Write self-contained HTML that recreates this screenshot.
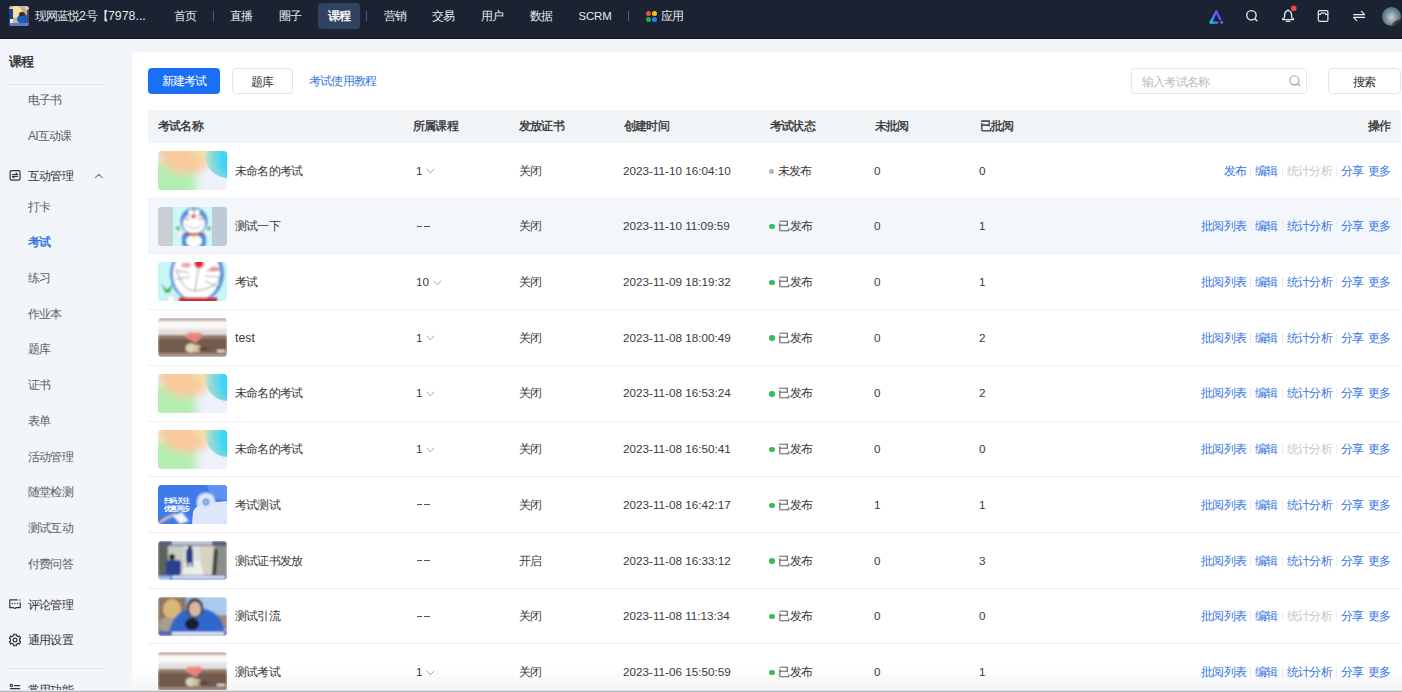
<!DOCTYPE html>
<html><head><meta charset="utf-8">
<style>
*{margin:0;padding:0;box-sizing:border-box}
html,body{width:1402px;height:692px;overflow:hidden;background:#f2f5f9;font-family:"Liberation Sans",sans-serif;color:#333;font-size:12px;letter-spacing:-0.8px}
.lt{letter-spacing:0;font-size:11.7px}
i{display:block;font-style:normal}
.abs{position:absolute;white-space:nowrap}
#nav{position:absolute;left:0;top:0;width:1402px;height:39px;background:#1b2232;border-bottom:1px solid #131822;z-index:5}
#nav .t{position:absolute;top:0;line-height:32px;color:#e6e8ec;font-size:12px;white-space:nowrap;letter-spacing:-1px}
#nav .act{position:absolute;left:318px;top:3px;width:42px;height:26px;border-radius:4px;background:#2e4462}
#nav .sep{position:absolute;top:11px;width:1px;height:10px;background:#555d6c}
#side{position:absolute;left:0;top:39px;width:132px;height:653px}
.st{position:absolute;left:28px;line-height:16px;height:16px;color:#5c5f66;white-space:nowrap}
.st.grp{color:#333}
.st.on{color:#2a6ee8;-webkit-text-stroke:0.4px #2a6ee8}
.sdiv{position:absolute;left:9px;width:97px;height:1px;background:#e3e6eb}
#card{position:absolute;left:132px;top:52px;width:1270px;height:640px;background:#fff}
.btn{position:absolute;height:26px;border-radius:4px;line-height:26px;text-align:center;font-size:12px;white-space:nowrap}
.hd{position:absolute;left:148px;top:110px;width:1253px;height:33px;background:#f2f5f8}
.hd span{position:absolute;top:9px;line-height:14px;color:#333;-webkit-text-stroke:0.35px #333;white-space:nowrap}
.row{position:absolute;left:148px;width:1253px;height:55.71px;border-bottom:1px solid #eef0f3;background:#fff}
.row.hov{background:#f3f7fc}
.th{position:absolute;left:10px;top:8px;width:69px;height:39px;border-radius:3px;overflow:hidden}
.c{position:absolute;top:19.5px;line-height:16px;height:16px;white-space:nowrap;color:#3a3a3a}
.nm{left:87px}
.co{left:268px}
.ce{left:371px}
.tm{left:475px}
.stt{left:621px}
.ur{left:726px}
.rd{left:831px}
.ac{right:11px;display:flex;align-items:center}
.cn{display:inline-block}
.chev{display:inline-block;margin-left:3.5px;position:relative;top:0px;vertical-align:middle}
.dash{display:flex;gap:2px;padding-left:0.5px;height:16px;align-items:center}.dash i{width:5.8px;height:1.1px;background:#555}
.dot{display:inline-block;width:5.4px;height:5.4px;border-radius:50%;background:#34bf5e;margin-right:4px;position:relative;top:-0.8px;left:0.4px}
.dot.grey{background:#b4b4b4;width:4.6px;height:4.6px}
.lk{color:#3877e4}
.lk.dis{color:#c4c6ca}
.lk.m{margin-left:4.2px}
.vs{display:inline-block;width:1px;height:10px;background:#ebedf0;margin:0 4.15px}
</style></head><body>
<div id="nav">
  <svg class="abs" style="left:8.5px;top:6.2px" width="20" height="20" viewBox="0 0 20 20"><defs><clipPath id="av"><rect width="20" height="20" rx="2.2"/></clipPath><filter id="avb"><feGaussianBlur stdDeviation="0.5"/></filter></defs><g clip-path="url(#av)"><g filter="url(#avb)">
<rect width="20" height="20" fill="#c9b48a"/>
<ellipse cx="7" cy="6" rx="6" ry="6" fill="#f3e2a8"/>
<rect x="0" y="3" width="4" height="15" fill="#1f3f8a"/>
<rect x="1" y="13" width="3" height="5" fill="#e8eef8"/>
<ellipse cx="14" cy="13" rx="6" ry="5" fill="#1f5bc0"/>
<ellipse cx="13" cy="8" rx="3" ry="2" fill="#3b2c22"/>
<rect x="18" y="0" width="2" height="20" fill="#5a4a48"/>
<circle cx="18" cy="2" r="2" fill="#c8d4e8"/>
<rect x="0" y="17" width="20" height="3" fill="#5a7ec8"/>
</g></g></svg>
  <div class="t" style="left:35px">现网蓝悦<span class="lt" style="font-size:12.4px">2</span>号【<span class="lt" style="font-size:12.4px">7978...</span></div>
  <div class="act"></div>
  <div class="t" style="left:174px">首页</div>
  <div class="sep" style="left:213px"></div>
  <div class="t" style="left:230px">直播</div>
  <div class="t" style="left:279px">圈子</div>
  <div class="t" style="left:327.5px;color:#fff;-webkit-text-stroke:0.4px #fff">课程</div>
  <div class="sep" style="left:366px"></div>
  <div class="t" style="left:384px">营销</div>
  <div class="t" style="left:432px">交易</div>
  <div class="t" style="left:481px">用户</div>
  <div class="t" style="left:530px">数据</div>
  <div class="t" style="left:578.5px;letter-spacing:-0.1px;font-size:11.4px">SCRM</div>
  <div class="sep" style="left:628px"></div>
  <div class="t" style="left:661px">应用</div>
  <div class="abs" style="left:646px;top:11px;width:11px;height:11px">
    <i style="position:absolute;left:0;top:0;width:5px;height:5px;border-radius:50%;background:#e9533c"></i>
    <i style="position:absolute;left:6px;top:0;width:5px;height:5px;border-radius:50%;background:#f4c41a"></i>
    <i style="position:absolute;left:0;top:6px;width:5px;height:5px;border-radius:50%;background:#22a95b"></i>
    <i style="position:absolute;left:6px;top:6px;width:5px;height:5px;border-radius:50%;background:#2b7ef0"></i>
  </div>
  <svg class="abs" style="left:1208px;top:8.6px" width="17" height="16" viewBox="0 0 17 16">
    <defs><linearGradient id="ga" x1="0" y1="1" x2="1" y2="0"><stop offset="0" stop-color="#27c2f7"/><stop offset="0.5" stop-color="#3a7cf5"/><stop offset="1" stop-color="#6a4cf0"/></linearGradient></defs>
    <path d="M8.3 2.6 L2.6 13.6 L9.2 13.6" fill="none" stroke="url(#ga)" stroke-width="2.4" stroke-linejoin="round" stroke-linecap="round"/>
    <path d="M8.3 2.6 L12.2 10.2" fill="none" stroke="#5a55f0" stroke-width="2.4" stroke-linecap="round"/>
    <circle cx="13.6" cy="13.2" r="1.5" fill="#7a5cf0"/>
  </svg>
  <svg class="abs" style="left:1244px;top:8px" width="16" height="16" viewBox="0 0 16 16">
    <circle cx="7.4" cy="7.3" r="4.7" fill="none" stroke="#e6e7ea" stroke-width="1.4"/>
    <path d="M10.8 10.7 L12.9 12.7" stroke="#e6e7ea" stroke-width="1.4" stroke-linecap="round"/>
  </svg>
  <svg class="abs" style="left:1280px;top:4px" width="20" height="20" viewBox="0 0 20 20">
    <path d="M2.6 15.6 Q2.6 14.6 3.8 14.2 Q4.6 13.8 4.6 12.4 L4.6 11.2 Q4.6 7.6 7.6 6.7 L7.8 6 Q8 5.7 8.3 6 L8.5 6.7 Q11.6 7.6 11.6 11.2 L11.6 12.4 Q11.6 13.8 12.4 14.2 Q13.6 14.6 13.6 15.6 Z" fill="none" stroke="#e6e7ea" stroke-width="1.3" stroke-linejoin="round"/>
    <path d="M6.4 17.4 L9.8 17.4" stroke="#e6e7ea" stroke-width="1.3" stroke-linecap="round"/>
    <circle cx="13.8" cy="4.3" r="2.8" fill="#f04848"/>
  </svg>
  <svg class="abs" style="left:1316px;top:9px" width="14" height="14" viewBox="0 0 14 14">
    <rect x="2.3" y="1.7" width="9.6" height="10.6" rx="1.2" fill="none" stroke="#e6e7ea" stroke-width="1.25"/>
    <path d="M2.3 5.4 L4.6 5.4 Q4.8 3.7 5.9 3.7 Q7.1 3.7 7.1 4.9 Q7.1 3.7 8.3 3.7 Q9.4 3.7 9.6 5.4 L11.9 5.4" fill="none" stroke="#e6e7ea" stroke-width="1.15"/>
  </svg>
  <svg class="abs" style="left:1352px;top:9px" width="14" height="14" viewBox="0 0 14 14">
    <path d="M1.6 5.6 L12.6 5.6 L9.4 2.3 M12.6 8.3 L1.6 8.3 L4.8 11.7" fill="none" stroke="#eef0f3" stroke-width="1.15" stroke-linecap="round" stroke-linejoin="round"/>
  </svg>
  <div class="abs" style="left:1381.5px;top:6.5px;width:19.5px;height:19.5px;border-radius:50%;background:radial-gradient(ellipse at 50% 55%,#cfc6c4 0,#a5b2b7 22%,#6d8894 50%,#40606e 85%);overflow:hidden"><i style="position:absolute;left:8px;top:13px;width:16px;height:10px;background:radial-gradient(ellipse at 60% 70%,#2b2925 40%,rgba(60,60,55,0.3) 90%);border-radius:50%;transform:rotate(-30deg)"></i></div>

</div>
<div id="side">
<div class="st grp" style="left:9px;top:15px;font-size:12.5px;color:#333;-webkit-text-stroke:0.45px #333">课程</div>
<div class="sdiv" style="top:45px"></div>
<div class="sdiv" style="top:629px"></div>
</div>
<div style="position:absolute;left:0;top:0;width:132px;height:692px">
<div class="st" style="top:92px">电子书</div>
<div class="st" style="top:128px">AI互动课</div>
<div class="st grp" style="top:168px">互动管理</div>
<div class="st" style="top:199px">打卡</div>
<div class="st on" style="top:234px">考试</div>
<div class="st" style="top:270px">练习</div>
<div class="st" style="top:306px">作业本</div>
<div class="st" style="top:341px">题库</div>
<div class="st" style="top:377px">证书</div>
<div class="st" style="top:413px">表单</div>
<div class="st" style="top:449px">活动管理</div>
<div class="st" style="top:484px">随堂检测</div>
<div class="st" style="top:520px">测试互动</div>
<div class="st" style="top:556px">付费问答</div>
<div class="st grp" style="top:597px">评论管理</div>
<div class="st grp" style="top:632px">通用设置</div>
<div class="st grp" style="top:682px">常用功能</div>
</div>

<svg class="abs" style="left:8px;top:168px" width="14" height="14" viewBox="0 0 14 14">
  <rect x="2.1" y="2.6" width="9.9" height="9.5" rx="1.4" fill="none" stroke="#333" stroke-width="1.2"/>
  <path d="M4.4 6.6 L9.7 6.6 L8 5 M9.6 8.4 L4.3 8.4 L6 10" fill="none" stroke="#333" stroke-width="1.05" stroke-linecap="round" stroke-linejoin="round"/>
</svg>
<svg class="abs" style="left:93px;top:171px" width="12" height="10" viewBox="0 0 12 10">
  <path d="M2.4 6.6 L5.9 3.3 L9.4 6.6" fill="none" stroke="#7a7d83" stroke-width="1.1" stroke-linecap="round" stroke-linejoin="round"/>
</svg>
<svg class="abs" style="left:7px;top:596px" width="16" height="16" viewBox="0 0 16 16">
  <path d="M10.6 3.8 L2.8 3.8 L2.8 11.6 L6.6 11.6 L7.8 12.6 L9 11.6 L13.2 11.6 L13.2 6.2" fill="none" stroke="#333" stroke-width="1.2" stroke-linejoin="round"/>
  <circle cx="12.8" cy="4" r="0.8" fill="#555"/>
  <circle cx="5.3" cy="7.5" r="0.75" fill="#444"/><circle cx="7.9" cy="7.5" r="0.75" fill="#444"/><circle cx="10.5" cy="7.5" r="0.75" fill="#444"/>
</svg>
<svg class="abs" style="left:7px;top:632px" width="16" height="16" viewBox="0 0 16 16">
  <path d="M6.67 2.25 L9.33 2.25 L9.30 3.48 L11.26 4.62 L12.31 3.98 L13.64 6.28 L12.56 6.86 L12.56 9.14 L13.64 9.72 L12.31 12.02 L11.26 11.38 L9.30 12.52 L9.33 13.75 L6.67 13.75 L6.70 12.52 L4.74 11.38 L3.69 12.02 L2.36 9.72 L3.44 9.14 L3.44 6.86 L2.36 6.28 L3.69 3.98 L4.74 4.62 L6.70 3.48 Z" fill="none" stroke="#333" stroke-width="1.2" stroke-linejoin="round"/>
  <circle cx="8" cy="8" r="1.9" fill="none" stroke="#333" stroke-width="1.2"/>
</svg>
<svg class="abs" style="left:7px;top:680px" width="16" height="14" viewBox="0 0 16 14">
  <circle cx="4.4" cy="5.6" r="1.2" fill="none" stroke="#333" stroke-width="1.1"/>
  <path d="M7 5.6 L13.2 5.6 M3 8.6 L13.2 8.6 M3 11.4 L13.2 11.4" stroke="#333" stroke-width="1.1"/>
</svg>
<div id="card"></div>
<div class="btn" style="left:148px;top:68px;width:72px;background:#1b6ff5;color:#fff">新建考试</div>
<div class="btn" style="left:232px;top:68px;width:61px;background:#fff;border:1px solid #e3e4e6;color:#333">题库</div>
<div class="abs" style="left:309px;top:73px;line-height:16px;color:#3877e4">考试使用教程</div>
<div class="btn" style="left:1131px;top:68px;width:176px;background:#fff;border:1px solid #e6e7ea;border-radius:3px;color:#bbb;text-align:left;padding-left:10px">输入考试名称</div>
<div class="btn" style="left:1328px;top:68px;width:72.5px;background:#fff;border:1px solid #e3e4e6;color:#333">搜索</div>
<svg class="abs" style="left:1287px;top:73px" width="16" height="16" viewBox="0 0 16 16">
  <circle cx="7.4" cy="7.3" r="4.6" fill="none" stroke="#9a9ca0" stroke-width="1.1"/>
  <path d="M10.7 10.6 L12.8 12.6" stroke="#9a9ca0" stroke-width="1.1" stroke-linecap="round"/>
</svg>
<div class="hd"><span style="left:10px">考试名称</span><span style="left:265px">所属课程</span><span style="left:371px">发放证书</span><span style="left:476px">创建时间</span><span style="left:622px">考试状态</span><span style="left:727px">未批阅</span><span style="left:832px">已批阅</span><span style="right:11px">操作</span></div>
<div class="row" style="top:143.0px"><svg class="th" width="69" height="39" viewBox="0 0 69 39"><defs><filter id="bl" x="-20%" y="-20%" width="140%" height="140%"><feGaussianBlur stdDeviation="0.85"/></filter><filter id="bl2" x="-50%" y="-50%" width="200%" height="200%"><feGaussianBlur stdDeviation="4"/></filter><clipPath id="rc"><rect width="69" height="39" rx="3"/></clipPath><radialGradient id="cg" cx="0.75" cy="0.6" r="0.8"><stop offset="0" stop-color="#2fd8ff"/><stop offset="0.45" stop-color="#3ad6fb"/><stop offset="0.75" stop-color="#8ed8d8"/><stop offset="1" stop-color="#d8e6c0"/></radialGradient></defs><g clip-path="url(#rc)">
<rect width="69" height="39" fill="#eef0fb"/>
<g filter="url(#bl2)">
<rect x="-10" y="12" width="48" height="35" fill="#b2eeb1"/>
<circle cx="28" cy="-6" r="29" fill="#f9c99c"/>
<circle cx="48" cy="-4" r="14" fill="#f7dea8"/>
</g>
<circle cx="70" cy="4" r="23" fill="url(#cg)"/>
</g></svg><div class="c nm">未命名的考试</div><div class="c co"><span class="cn lt">1</span><svg class="chev" width="9" height="6" viewBox="0 0 9 6"><path d="M0.6 0.8 L4.4 4.8 L8.2 0.8" fill="none" stroke="#a3a5a8" stroke-width="1"/></svg></div><div class="c ce">关闭</div><div class="c tm lt">2023-11-10 16:04:10</div><div class="c stt"><i class="dot grey"></i>未发布</div><div class="c ur lt">0</div><div class="c rd lt">0</div><div class="c ac"><span class="lk">发布</span><i class="vs"></i><span class="lk">编辑</span><i class="vs"></i><span class="lk dis">统计分析</span><i class="vs"></i><span class="lk">分享</span><span class="lk m">更多</span></div></div>
<div class="row hov" style="top:198.7px"><svg class="th" width="69" height="39" viewBox="0 0 69 39"><defs><filter id="bl" x="-20%" y="-20%" width="140%" height="140%"><feGaussianBlur stdDeviation="0.85"/></filter><filter id="bl2" x="-50%" y="-50%" width="200%" height="200%"><feGaussianBlur stdDeviation="4"/></filter><clipPath id="rc"><rect width="69" height="39" rx="3"/></clipPath></defs><g clip-path="url(#rc)">
<rect width="69" height="39" fill="#cff6f8"/>
<rect width="15" height="39" fill="#c8d0d3"/>
<rect x="54" width="15" height="39" fill="#bdcbd7"/>
<g filter="url(#bl)">
<rect x="24" y="26" width="24" height="14" rx="4" fill="#4d8fda"/>
<ellipse cx="36" cy="34" rx="8" ry="6" fill="#fff"/>
<circle cx="36" cy="14" r="13.5" fill="#4e8fdb"/>
<ellipse cx="36" cy="16.5" rx="11" ry="10" fill="#fff"/>
<ellipse cx="33" cy="5.5" rx="3" ry="3.5" fill="#fff" stroke="#333" stroke-width="0.3"/>
<ellipse cx="39" cy="5.5" rx="3" ry="3.5" fill="#fff" stroke="#333" stroke-width="0.3"/>
<circle cx="35.5" cy="9.5" r="2" fill="#e01e2a"/>
<ellipse cx="29" cy="12" rx="3" ry="1.3" fill="#f2a8a8"/>
<ellipse cx="43" cy="12" rx="3" ry="1.3" fill="#f2a8a8"/>
<path d="M27 17 Q36 26 45 17" fill="none" stroke="#555" stroke-width="0.4"/>
<rect x="26" y="26" width="20" height="2" rx="1" fill="#b3222a"/>
<circle cx="36" cy="29.5" r="1.8" fill="#f1d23e"/>
<circle cx="21.5" cy="27" r="2.5" fill="#fff" stroke="#999" stroke-width="0.3"/>
<circle cx="50" cy="27" r="2.5" fill="#fff" stroke="#999" stroke-width="0.3"/>
<path d="M17 20 L21 24 L22 20 Z" fill="#4caf50"/>
<path d="M54 20 L50 24 L49 20 Z" fill="#4caf50"/>
</g>
</g></svg><div class="c nm">测试一下</div><div class="c co"><span class="dash"><i></i><i></i></span></div><div class="c ce">关闭</div><div class="c tm lt">2023-11-10 11:09:59</div><div class="c stt"><i class="dot"></i>已发布</div><div class="c ur lt">0</div><div class="c rd lt">1</div><div class="c ac"><span class="lk">批阅列表</span><i class="vs"></i><span class="lk">编辑</span><i class="vs"></i><span class="lk">统计分析</span><i class="vs"></i><span class="lk">分享</span><span class="lk m">更多</span></div></div>
<div class="row" style="top:254.4px"><svg class="th" width="69" height="39" viewBox="0 0 69 39"><defs><filter id="bl" x="-20%" y="-20%" width="140%" height="140%"><feGaussianBlur stdDeviation="0.85"/></filter><filter id="bl2" x="-50%" y="-50%" width="200%" height="200%"><feGaussianBlur stdDeviation="4"/></filter><clipPath id="rc"><rect width="69" height="39" rx="3"/></clipPath></defs><g clip-path="url(#rc)">
<rect width="69" height="39" fill="#c8f6f8"/>
<g filter="url(#bl)">
<ellipse cx="39" cy="12" rx="27" ry="28" fill="#5a95de"/>
<ellipse cx="38.5" cy="12" rx="23.5" ry="26" fill="#fff"/>
<ellipse cx="28" cy="3" rx="5" ry="2.5" fill="#f0a0a0"/>
<ellipse cx="56" cy="7" rx="5" ry="2.5" fill="#f0a0a0"/>
<circle cx="41" cy="1.5" r="4.8" fill="#e8202c"/>
<path d="M40.5 6 L37 28" stroke="#444" stroke-width="0.6"/>
<path d="M18.5 8 Q26 32 40 28.5 Q58 27 63.5 13" fill="none" stroke="#444" stroke-width="0.6"/>
<path d="M18 8 L31 11 M18 17 L32 15 M48 9 L62 8 M47 14 L63 15 M47 19 L62 26" stroke="#555" stroke-width="0.55"/>
<rect x="21" y="35.5" width="38" height="5" fill="#c8262e"/>
<circle cx="13" cy="37" r="4" fill="#fff" stroke="#888" stroke-width="0.4"/>
<path d="M3 22 L9 28 L15 22 L12 30 L8 31 Z" fill="#3aa84f"/>
</g>
</g></svg><div class="c nm">考试</div><div class="c co"><span class="cn lt">10</span><svg class="chev" width="9" height="6" viewBox="0 0 9 6"><path d="M0.6 0.8 L4.4 4.8 L8.2 0.8" fill="none" stroke="#a3a5a8" stroke-width="1"/></svg></div><div class="c ce">关闭</div><div class="c tm lt">2023-11-09 18:19:32</div><div class="c stt"><i class="dot"></i>已发布</div><div class="c ur lt">0</div><div class="c rd lt">1</div><div class="c ac"><span class="lk">批阅列表</span><i class="vs"></i><span class="lk">编辑</span><i class="vs"></i><span class="lk">统计分析</span><i class="vs"></i><span class="lk">分享</span><span class="lk m">更多</span></div></div>
<div class="row" style="top:310.1px"><svg class="th" width="69" height="39" viewBox="0 0 69 39"><defs><filter id="bl" x="-20%" y="-20%" width="140%" height="140%"><feGaussianBlur stdDeviation="0.85"/></filter><filter id="bl2" x="-50%" y="-50%" width="200%" height="200%"><feGaussianBlur stdDeviation="4"/></filter><clipPath id="rc"><rect width="69" height="39" rx="3"/></clipPath></defs><g clip-path="url(#rc)">
<g filter="url(#bl)">
<rect width="69" height="39" fill="#77604f"/>
<rect width="69" height="3" fill="#bea8a2"/>
<rect y="3" width="69" height="9" fill="#f9f8f7"/>
<rect y="11" width="69" height="7" fill="#e4e0df"/>
<rect y="17" width="69" height="4" fill="#8f7867"/>
<rect y="21" width="69" height="14" fill="#735c4c"/>
<rect y="35" width="69" height="4" fill="#a28c82"/>
<path d="M27 19 Q29 13 36 15 Q42 13 45 17 Q41 22 38 25 Q32 22 27 19 Z" fill="#e8857f"/>
<ellipse cx="33" cy="30" rx="5.5" ry="4.5" fill="#e2d6ba"/>
<ellipse cx="39" cy="30.5" rx="4" ry="3.5" fill="#d4c6a4"/>
<ellipse cx="45" cy="31" rx="5" ry="1.4" fill="#55443a"/>
<rect x="59" y="32" width="8" height="2" fill="#e8e8e8"/>
</g>
</g></svg><div class="c nm lt" style="font-size:12.3px">test</div><div class="c co"><span class="cn lt">1</span><svg class="chev" width="9" height="6" viewBox="0 0 9 6"><path d="M0.6 0.8 L4.4 4.8 L8.2 0.8" fill="none" stroke="#a3a5a8" stroke-width="1"/></svg></div><div class="c ce">关闭</div><div class="c tm lt">2023-11-08 18:00:49</div><div class="c stt"><i class="dot"></i>已发布</div><div class="c ur lt">0</div><div class="c rd lt">2</div><div class="c ac"><span class="lk">批阅列表</span><i class="vs"></i><span class="lk">编辑</span><i class="vs"></i><span class="lk">统计分析</span><i class="vs"></i><span class="lk">分享</span><span class="lk m">更多</span></div></div>
<div class="row" style="top:365.8px"><svg class="th" width="69" height="39" viewBox="0 0 69 39"><defs><filter id="bl" x="-20%" y="-20%" width="140%" height="140%"><feGaussianBlur stdDeviation="0.85"/></filter><filter id="bl2" x="-50%" y="-50%" width="200%" height="200%"><feGaussianBlur stdDeviation="4"/></filter><clipPath id="rc"><rect width="69" height="39" rx="3"/></clipPath><radialGradient id="cg" cx="0.75" cy="0.6" r="0.8"><stop offset="0" stop-color="#2fd8ff"/><stop offset="0.45" stop-color="#3ad6fb"/><stop offset="0.75" stop-color="#8ed8d8"/><stop offset="1" stop-color="#d8e6c0"/></radialGradient></defs><g clip-path="url(#rc)">
<rect width="69" height="39" fill="#eef0fb"/>
<g filter="url(#bl2)">
<rect x="-10" y="12" width="48" height="35" fill="#b2eeb1"/>
<circle cx="28" cy="-6" r="29" fill="#f9c99c"/>
<circle cx="48" cy="-4" r="14" fill="#f7dea8"/>
</g>
<circle cx="70" cy="4" r="23" fill="url(#cg)"/>
</g></svg><div class="c nm">未命名的考试</div><div class="c co"><span class="cn lt">1</span><svg class="chev" width="9" height="6" viewBox="0 0 9 6"><path d="M0.6 0.8 L4.4 4.8 L8.2 0.8" fill="none" stroke="#a3a5a8" stroke-width="1"/></svg></div><div class="c ce">关闭</div><div class="c tm lt">2023-11-08 16:53:24</div><div class="c stt"><i class="dot"></i>已发布</div><div class="c ur lt">0</div><div class="c rd lt">2</div><div class="c ac"><span class="lk">批阅列表</span><i class="vs"></i><span class="lk">编辑</span><i class="vs"></i><span class="lk">统计分析</span><i class="vs"></i><span class="lk">分享</span><span class="lk m">更多</span></div></div>
<div class="row" style="top:421.6px"><svg class="th" width="69" height="39" viewBox="0 0 69 39"><defs><filter id="bl" x="-20%" y="-20%" width="140%" height="140%"><feGaussianBlur stdDeviation="0.85"/></filter><filter id="bl2" x="-50%" y="-50%" width="200%" height="200%"><feGaussianBlur stdDeviation="4"/></filter><clipPath id="rc"><rect width="69" height="39" rx="3"/></clipPath><radialGradient id="cg" cx="0.75" cy="0.6" r="0.8"><stop offset="0" stop-color="#2fd8ff"/><stop offset="0.45" stop-color="#3ad6fb"/><stop offset="0.75" stop-color="#8ed8d8"/><stop offset="1" stop-color="#d8e6c0"/></radialGradient></defs><g clip-path="url(#rc)">
<rect width="69" height="39" fill="#eef0fb"/>
<g filter="url(#bl2)">
<rect x="-10" y="12" width="48" height="35" fill="#b2eeb1"/>
<circle cx="28" cy="-6" r="29" fill="#f9c99c"/>
<circle cx="48" cy="-4" r="14" fill="#f7dea8"/>
</g>
<circle cx="70" cy="4" r="23" fill="url(#cg)"/>
</g></svg><div class="c nm">未命名的考试</div><div class="c co"><span class="cn lt">1</span><svg class="chev" width="9" height="6" viewBox="0 0 9 6"><path d="M0.6 0.8 L4.4 4.8 L8.2 0.8" fill="none" stroke="#a3a5a8" stroke-width="1"/></svg></div><div class="c ce">关闭</div><div class="c tm lt">2023-11-08 16:50:41</div><div class="c stt"><i class="dot"></i>已发布</div><div class="c ur lt">0</div><div class="c rd lt">0</div><div class="c ac"><span class="lk">批阅列表</span><i class="vs"></i><span class="lk">编辑</span><i class="vs"></i><span class="lk dis">统计分析</span><i class="vs"></i><span class="lk">分享</span><span class="lk m">更多</span></div></div>
<div class="row" style="top:477.3px"><svg class="th" width="69" height="39" viewBox="0 0 69 39"><defs><filter id="bl" x="-20%" y="-20%" width="140%" height="140%"><feGaussianBlur stdDeviation="0.85"/></filter><filter id="bl2" x="-50%" y="-50%" width="200%" height="200%"><feGaussianBlur stdDeviation="4"/></filter><clipPath id="rc"><rect width="69" height="39" rx="3"/></clipPath></defs><g clip-path="url(#rc)">
<rect width="69" height="39" fill="#3f7be8"/>
<circle cx="66" cy="-2" r="17" fill="#5f92f0"/>
<path d="M34 39 L35 27 Q37 20 50 18 L69 16 L69 39 Z" fill="#dce7fb"/>
<g filter="url(#bl)">
<circle cx="48" cy="17" r="9.5" fill="#eaf1fd"/>
<circle cx="48" cy="17" r="7" fill="none" stroke="#b9cff5" stroke-width="2" stroke-dasharray="1 1"/>
<circle cx="48" cy="17" r="3.4" fill="#2d6be0"/>
<circle cx="48" cy="17" r="1.3" fill="#fff"/>
<path d="M0 37 Q8 31 17 28 L18 30 Q9 34 1 39 Z" fill="#f0c59a"/>
<path d="M15 31 L24 27 L31 36 L22 39 Z" fill="#f4f7fd"/>
</g>
<text x="5.5" y="17.5" font-size="7.4" fill="#fff" font-weight="bold" letter-spacing="-0.4">扫码关注</text>
<text x="5.5" y="26" font-size="7.4" fill="#fff" font-weight="bold" letter-spacing="-0.4">优惠同步</text>
</g></svg><div class="c nm">考试测试</div><div class="c co"><span class="dash"><i></i><i></i></span></div><div class="c ce">关闭</div><div class="c tm lt">2023-11-08 16:42:17</div><div class="c stt"><i class="dot"></i>已发布</div><div class="c ur lt">1</div><div class="c rd lt">1</div><div class="c ac"><span class="lk">批阅列表</span><i class="vs"></i><span class="lk">编辑</span><i class="vs"></i><span class="lk">统计分析</span><i class="vs"></i><span class="lk">分享</span><span class="lk m">更多</span></div></div>
<div class="row" style="top:533.0px"><svg class="th" width="69" height="39" viewBox="0 0 69 39"><defs><filter id="bl" x="-20%" y="-20%" width="140%" height="140%"><feGaussianBlur stdDeviation="0.85"/></filter><filter id="bl2" x="-50%" y="-50%" width="200%" height="200%"><feGaussianBlur stdDeviation="4"/></filter><clipPath id="rc"><rect width="69" height="39" rx="3"/></clipPath></defs><g clip-path="url(#rc)">
<g filter="url(#bl)">
<rect width="69" height="39" fill="#c9cbc2"/>
<rect width="69" height="5" fill="#56617a"/>
<rect x="14" y="0" width="40" height="4" fill="#b8c2d4"/>
<rect x="0" y="5" width="10" height="30" fill="#5b6358"/>
<rect x="10" y="5" width="16" height="28" fill="#c8ccc4"/>
<rect x="26" y="5" width="16" height="26" fill="#dfe2dc"/>
<rect x="42" y="5" width="14" height="28" fill="#d6d4c0"/>
<rect x="56" y="5" width="13" height="30" fill="#8d9088"/>
<path d="M56 8 L60 8 L58 34 L54 34 Z" fill="#3b3f3a"/>
<path d="M24 34 L28 20 L42 20 L46 34 Z" fill="#eceee8"/>
<rect x="8" y="19" width="15" height="15" rx="3" fill="#2a3f90"/>
<circle cx="14" cy="16" r="3" fill="#1e1e24"/>
<rect x="28" y="8" width="7" height="14" rx="2" fill="#26408f"/>
<rect x="29" y="20" width="2" height="6" fill="#26408f"/><rect x="33" y="20" width="2" height="6" fill="#26408f"/>
<circle cx="32" cy="7" r="2" fill="#1e1e24"/>
<rect x="0" y="34" width="69" height="5" fill="#4466c2"/>
<rect x="14" y="35" width="53" height="2.6" fill="#e8ecf5"/>
<rect x="0" y="35" width="12" height="4" fill="#9cc0ee"/>
</g>
</g></svg><div class="c nm">测试证书发放</div><div class="c co"><span class="dash"><i></i><i></i></span></div><div class="c ce">开启</div><div class="c tm lt">2023-11-08 16:33:12</div><div class="c stt"><i class="dot"></i>已发布</div><div class="c ur lt">0</div><div class="c rd lt">3</div><div class="c ac"><span class="lk">批阅列表</span><i class="vs"></i><span class="lk">编辑</span><i class="vs"></i><span class="lk">统计分析</span><i class="vs"></i><span class="lk">分享</span><span class="lk m">更多</span></div></div>
<div class="row" style="top:588.7px"><svg class="th" width="69" height="39" viewBox="0 0 69 39"><defs><filter id="bl" x="-20%" y="-20%" width="140%" height="140%"><feGaussianBlur stdDeviation="0.85"/></filter><filter id="bl2" x="-50%" y="-50%" width="200%" height="200%"><feGaussianBlur stdDeviation="4"/></filter><clipPath id="rc"><rect width="69" height="39" rx="3"/></clipPath></defs><g clip-path="url(#rc)">
<g filter="url(#bl)">
<rect width="69" height="39" fill="#8fb4e6"/>
<rect x="36" y="0" width="33" height="20" fill="#a9c9ee"/>
<rect x="56" y="18" width="13" height="14" fill="#a5896e"/>
<rect x="0" y="0" width="28" height="39" fill="#8c7862"/>
<ellipse cx="14" cy="12" rx="9" ry="10" fill="#d8b878"/>
<ellipse cx="9" cy="28" rx="8" ry="8" fill="#a89e90"/>
<path d="M10 39 Q14 18 27 13 L48 12 Q62 16 66 30 L66 39 Z" fill="#2d67cc"/>
<ellipse cx="37" cy="11" rx="8.5" ry="10" fill="#3b3634"/>
<ellipse cx="37" cy="12" rx="6" ry="7.5" fill="#d8b8a0"/>
<ellipse cx="34" cy="27" rx="7" ry="6" fill="#161b2c"/>
<rect x="0" y="34" width="69" height="5" fill="#536bb4"/>
<rect x="14" y="35" width="52" height="3" fill="#dfe5f2"/>
</g>
</g></svg><div class="c nm">测试引流</div><div class="c co"><span class="dash"><i></i><i></i></span></div><div class="c ce">关闭</div><div class="c tm lt">2023-11-08 11:13:34</div><div class="c stt"><i class="dot"></i>已发布</div><div class="c ur lt">0</div><div class="c rd lt">0</div><div class="c ac"><span class="lk">批阅列表</span><i class="vs"></i><span class="lk">编辑</span><i class="vs"></i><span class="lk dis">统计分析</span><i class="vs"></i><span class="lk">分享</span><span class="lk m">更多</span></div></div>
<div class="row" style="top:644.4px"><svg class="th" width="69" height="39" viewBox="0 0 69 39"><defs><filter id="bl" x="-20%" y="-20%" width="140%" height="140%"><feGaussianBlur stdDeviation="0.85"/></filter><filter id="bl2" x="-50%" y="-50%" width="200%" height="200%"><feGaussianBlur stdDeviation="4"/></filter><clipPath id="rc"><rect width="69" height="39" rx="3"/></clipPath></defs><g clip-path="url(#rc)">
<g filter="url(#bl)">
<rect width="69" height="39" fill="#77604f"/>
<rect width="69" height="3" fill="#bea8a2"/>
<rect y="3" width="69" height="9" fill="#f9f8f7"/>
<rect y="11" width="69" height="7" fill="#e4e0df"/>
<rect y="17" width="69" height="4" fill="#8f7867"/>
<rect y="21" width="69" height="14" fill="#735c4c"/>
<rect y="35" width="69" height="4" fill="#a28c82"/>
<path d="M27 19 Q29 13 36 15 Q42 13 45 17 Q41 22 38 25 Q32 22 27 19 Z" fill="#e8857f"/>
<ellipse cx="33" cy="30" rx="5.5" ry="4.5" fill="#e2d6ba"/>
<ellipse cx="39" cy="30.5" rx="4" ry="3.5" fill="#d4c6a4"/>
<ellipse cx="45" cy="31" rx="5" ry="1.4" fill="#55443a"/>
<rect x="59" y="32" width="8" height="2" fill="#e8e8e8"/>
</g>
</g></svg><div class="c nm">测试考试</div><div class="c co"><span class="cn lt">1</span><svg class="chev" width="9" height="6" viewBox="0 0 9 6"><path d="M0.6 0.8 L4.4 4.8 L8.2 0.8" fill="none" stroke="#a3a5a8" stroke-width="1"/></svg></div><div class="c ce">关闭</div><div class="c tm lt">2023-11-06 15:50:59</div><div class="c stt"><i class="dot"></i>已发布</div><div class="c ur lt">0</div><div class="c rd lt">1</div><div class="c ac"><span class="lk">批阅列表</span><i class="vs"></i><span class="lk">编辑</span><i class="vs"></i><span class="lk">统计分析</span><i class="vs"></i><span class="lk">分享</span><span class="lk m">更多</span></div></div>
<div class="abs" style="left:132px;top:668px;width:1270px;height:22px;background:linear-gradient(rgba(0,0,0,0),rgba(0,0,0,0.045));z-index:8"></div><div class="abs" style="left:0;top:690px;width:1402px;height:1px;background:#e2e4e6;z-index:9"></div><div class="abs" style="left:0;top:691px;width:1402px;height:1px;background:#b3b7ba;z-index:9"></div>
</body></html>
